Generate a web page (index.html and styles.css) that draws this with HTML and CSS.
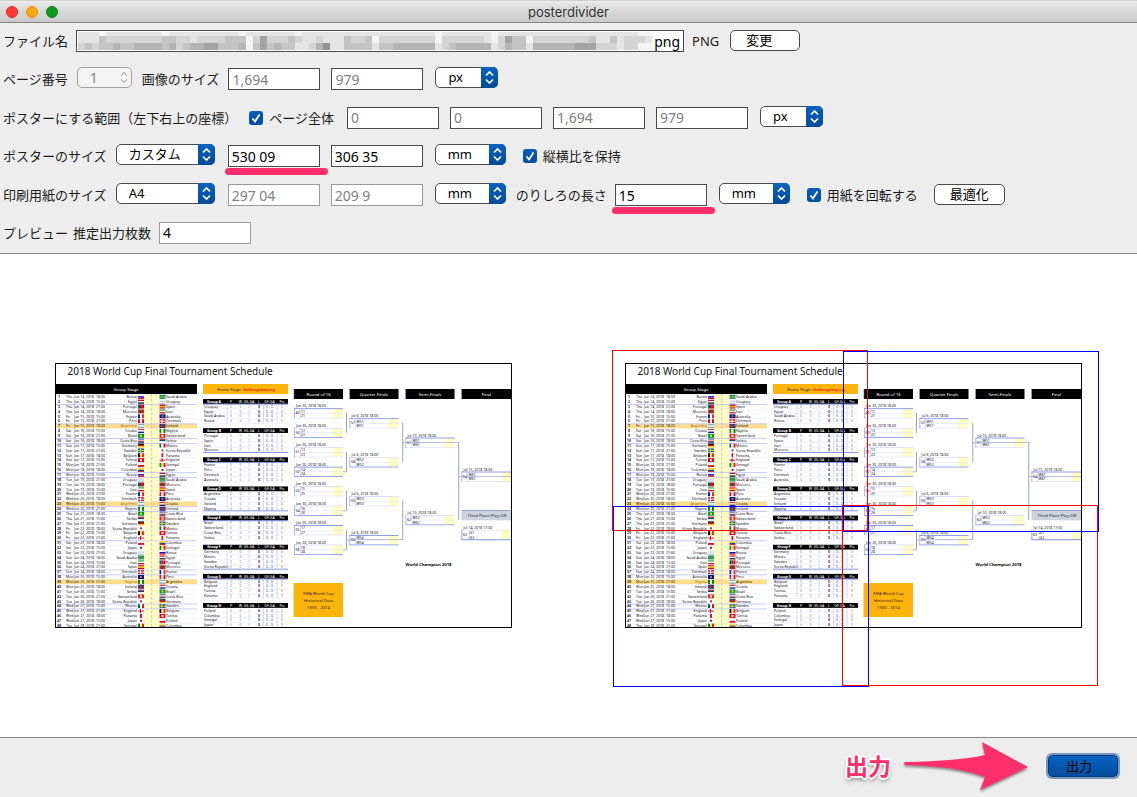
FILE: index.html
```
<!DOCTYPE html>
<html lang="ja">
<head>
    <meta charset="UTF-8">
    <meta name="viewport" content="width=device-width, initial-scale=1.0">
    <title>posterdivider</title>
    <link rel="stylesheet" href="styles.css">
</head>
<body>
    <header class="titlebar">
        <div class="lights">
            <span class="light close"></span>
            <span class="light minimize"></span>
            <span class="light maximize"></span>
        </div>
        <h1>posterdivider</h1>
    </header>

    <form class="settings" id="settings">
        <div class="row">
            <label for="fileName">ファイル名</label>
            <div class="file-field">
                <input type="text" id="fileName" class="field file-name" value="png" readonly>
                <svg id="mosaic" class="mosaic" viewBox="0 0 576 18" preserveAspectRatio="none"></svg>
            </div>
            <span class="text">PNG</span>
            <button type="button" class="btn btn-change">変更</button>
        </div>

        <div class="row">
            <label for="pageNumber">ページ番号</label>
            <div class="spinner">
                <input type="text" id="pageNumber" value="1" disabled>
                <svg class="chevrons" viewBox="0 0 8 14"><path d="M1 5l3-3.5L7 5M1 9l3 3.5L7 9"/></svg>
            </div>
            <label for="imageWidth">画像のサイズ</label>
            <input type="text" id="imageWidth" class="field" value="1,694" disabled>
            <input type="text" class="field" value="979" aria-label="画像の高さ" disabled>
            <div class="select unit-px">
                <select aria-label="単位"><option>px</option></select>
            </div>
        </div>

        <div class="row">
            <span class="text">ポスターにする範囲（左下右上の座標）</span>
            <input type="checkbox" id="wholePage" class="check" checked>
            <label for="wholePage" class="check-label">ページ全体</label>
            <input type="text" class="field" value="0" aria-label="左" disabled>
            <input type="text" class="field" value="0" aria-label="下" disabled>
            <input type="text" class="field" value="1,694" aria-label="右" disabled>
            <input type="text" class="field" value="979" aria-label="上" disabled>
            <div class="select unit-px">
                <select aria-label="単位"><option>px</option></select>
            </div>
        </div>

        <div class="row">
            <label for="posterSize">ポスターのサイズ</label>
            <div class="select size">
                <select id="posterSize"><option>カスタム</option></select>
            </div>
            <div class="marked">
                <input type="text" class="field" value="530 09" aria-label="ポスターの幅">
            </div>
            <input type="text" class="field" value="306 35" aria-label="ポスターの高さ">
            <div class="select unit-mm">
                <select aria-label="単位"><option>mm</option></select>
            </div>
            <input type="checkbox" id="keepRatio" class="check" checked>
            <label for="keepRatio" class="check-label">縦横比を保持</label>
        </div>

        <div class="row">
            <label for="paperSize">印刷用紙のサイズ</label>
            <div class="select size">
                <select id="paperSize"><option>A4</option></select>
            </div>
            <input type="text" class="field muted" value="297 04" aria-label="用紙の幅" disabled>
            <input type="text" class="field muted" value="209 9" aria-label="用紙の高さ" disabled>
            <div class="select unit-mm">
                <select aria-label="単位"><option>mm</option></select>
            </div>
            <label for="margin">のりしろの長さ</label>
            <div class="marked">
                <input type="text" id="margin" class="field" value="15">
            </div>
            <div class="select unit-mm">
                <select aria-label="単位"><option>mm</option></select>
            </div>
            <input type="checkbox" id="rotatePaper" class="check" checked>
            <label for="rotatePaper" class="check-label">用紙を回転する</label>
            <button type="button" class="btn">最適化</button>
        </div>

        <div class="row">
            <span class="text preview-title">プレビュー</span>
            <label for="sheetCount">推定出力枚数</label>
            <input type="text" id="sheetCount" class="field muted" value="4" readonly>
        </div>
    </form>

    <main class="preview">
        <svg id="source" class="poster" width="458" height="337" viewBox="0 -52 1832 1348"></svg>
        <svg id="divided" class="poster" width="487" height="337" viewBox="-52 -52 1948 1348"></svg>
    </main>

    <footer class="actions">
        <span class="callout">出力</span>
        <svg class="arrow" width="126" height="50" viewBox="0 0 126 50">
            <path d="M2 21Q56 20 82 14L79 1L125 26L77 49L82 36Q54 25 2 24Q0 22 2 21Z"/>
        </svg>
        <button type="submit" form="settings" class="output">出力</button>
    </footer>

    <script src="script.js"></script>
</body>
</html>
```
FILE: styles.css
```
* {
    box-sizing: border-box;
}

body {
    margin: 0;
    min-height: 100vh;
    display: flex;
    flex-direction: column;
    background-color: #ededed;
    color: #1c1c1c;
    font-family: "Noto Sans", "Noto Sans CJK JP", sans-serif;
    font-size: 13px;
}

input, select, button {
    font-family: inherit;
}

/* Title bar */
.titlebar {
    display: grid;
    grid-template-columns: 1fr auto 1fr;
    align-items: center;
    height: 23px;
    padding: 1px 6px 0;
    background: linear-gradient(#ededed, #e2e2e2 3px, #cacaca);
    border-top: 1px solid #cfcfcf;
    border-bottom: 1px solid #858585;
}

.titlebar h1 {
    margin: 0;
    font-family: Inter, sans-serif;
    font-size: 13px;
    font-weight: 400;
    line-height: 20px;
    color: #333;
}

.lights {
    display: flex;
    gap: 8px;
}

.light {
    width: 12px;
    height: 12px;
    border-radius: 50%;
}

.close {
    background-color: #ff3b3b;
    border: 1px solid #e0282c;
}

.minimize {
    background-color: #f7a80d;
    border: 1px solid #dd930a;
}

.maximize {
    background-color: #0b9a20;
    border: 1px solid #078018;
}

/* Settings rows */
.settings {
    display: flex;
    flex-direction: column;
    min-height: 230px;
    padding: 0 0 2px 3px;
}

.row {
    flex: 1;
    display: flex;
    align-items: center;
}

label, .text {
    margin-right: 8px;
    line-height: 20px;
    white-space: nowrap;
}

.field {
    width: 92px;
    height: 22px;
    margin-right: 11px;
    padding: 0 3px;
    border: 1px solid #4a4a4a;
    border-radius: 0;
    background-color: #fff;
    color: #000;
    font-size: 14px;
}

.field:disabled {
    color: #808080;
}

.muted {
    border-color: #9a9a9a;
}

.preview-title {
    margin-right: 5px;
}

/* File name with its hidden part */
.file-field {
    position: relative;
    flex: 0 1 608px;
    margin-right: 8px;
}

.file-name {
    display: block;
    width: 100%;
    margin: 0;
    text-align: right;
}

.mosaic {
    position: absolute;
    left: 2px;
    top: 2px;
    width: calc(100% - 32px);
    height: 18px;
}

/* Drop-downs */
.select {
    position: relative;
    height: 21px;
    margin: 0 11px 3px 1px;
}

.select select {
    display: block;
    width: 100%;
    height: 21px;
    padding: 0 20px 0 12px;
    appearance: none;
    border: 1px solid #4a4a4a;
    border-radius: 5px;
    background-color: #fff;
    color: #000;
    font-size: 13px;
    line-height: 19px;
}

.select::after {
    content: "";
    position: absolute;
    top: 0;
    right: 0;
    width: 17px;
    height: 21px;
    border-radius: 0 5px 5px 0;
    background: url("data:image/svg+xml,%3Csvg xmlns='http://www.w3.org/2000/svg' viewBox='0 0 17 21'%3E%3Cpath d='M5 8.5l3.5-3.5L12 8.5M5 12.5l3.5 3.5 3.5-3.5' fill='none' stroke='white' stroke-width='1.6'/%3E%3C/svg%3E"), linear-gradient(#0a62c0, #014a98);
    pointer-events: none;
}

.size {
    width: 99px;
    margin-right: 13px;
}

.unit-px {
    width: 63px;
}

.unit-mm {
    width: 71px;
    margin-right: 10px;
}

.spinner {
    position: relative;
    width: 55px;
    margin: 0 10px 3px 1px;
}

.spinner input {
    display: block;
    width: 100%;
    height: 21px;
    padding: 0 12px;
    border: 1px solid #a0a0a0;
    border-radius: 5px;
    background-color: #f3f3f3;
    color: #808080;
    font-size: 14px;
}

.spinner + label {
    margin-right: 9px;
}

.chevrons {
    position: absolute;
    right: 4px;
    top: 4px;
    width: 8px;
    height: 13px;
    fill: none;
    stroke: #8a8a8a;
}

/* Tick boxes */
.check {
    flex: none;
    appearance: none;
    width: 14px;
    height: 14px;
    margin: 0 6px 0 4px;
    border-radius: 3px;
    background: url("data:image/svg+xml,%3Csvg xmlns='http://www.w3.org/2000/svg' viewBox='0 0 14 14'%3E%3Cpath d='M3.5 7.5l2.5 3L10.5 3.5' fill='none' stroke='white' stroke-width='1.8'/%3E%3C/svg%3E"), linear-gradient(#0a5cb8, #014c9c);
}

.unit-mm + .check {
    margin-left: 7px;
}

.check-label {
    margin-right: 13px;
}

/* Buttons */
.btn {
    height: 21px;
    margin: 0 0 1px 3px;
    padding: 0 15px 1px;
    border: 1px solid #4a4a4a;
    border-radius: 5px;
    background-color: #fff;
    color: #000;
    font-size: 13px;
    line-height: 18px;
}

.btn-change {
    padding-right: 27px;
}

/* Pink underline below a value */
.marked {
    position: relative;
}

.marked::after {
    content: "";
    position: absolute;
    left: -3px;
    top: 23px;
    width: 103px;
    height: 7px;
    border-radius: 4px;
    background-color: #ff2e6c;
}

/* Preview */
.preview {
    flex: 1;
    display: flex;
    justify-content: space-between;
    align-items: flex-start;
    padding: 96px 38px 50px 55px;
    background-color: #fff;
    border-top: 1px solid #858585;
    border-bottom: 1px solid #858585;
}

.poster {
    overflow: visible;
    font-size: 14px;
}

.poster .title {
    font-size: 40px;
}

.poster .head {
    font-size: 17px;
}

.poster .strong {
    font-weight: 700;
}

/* Output bar */
.actions {
    display: flex;
    align-items: center;
    justify-content: flex-end;
    height: 59px;
    padding: 0 19px 3px 0;
}

.callout {
    margin-right: 12px;
    color: #ff2e6c;
    font-size: 23px;
    font-weight: 700;
    line-height: 28px;
    text-shadow: 2px 0 #fff, -2px 0 #fff, 0 2px #fff, 0 -2px #fff, 1px 1px #fff, -1px 1px #fff, 1px -1px #fff, -1px -1px #fff, 0 3px 4px #666;
}

.arrow {
    margin-right: 19px;
    fill: #ff2e6c;
    filter: drop-shadow(0 2px 1px rgba(0, 0, 0, 0.4));
    overflow: visible;
}

.output {
    height: 22px;
    padding: 0 25px 0 17px;
    border: 1px solid #003a7c;
    border-radius: 4px;
    background: linear-gradient(#0863c2, #004c9c);
    box-shadow: 0 0 0 2px #7598bd;
    color: #000;
    font-size: 13px;
    line-height: 20px;
}
```
FILE: script.js
```
const NS = "http://www.w3.org/2000/svg";
const U = 4; // drawing units per pixel

// stripes: "h" rows or "v" columns, then the colours
const flags = {
    "Russia": ["h", "#fff", "#00f", "#d00"],
    "Saudi Arabia": ["h", "#1c8a3c", "#3a9b50", "#1c8a3c"],
    "Egypt": ["h", "#c8102e", "#fff", "#111"],
    "Uruguay": ["h", "#fff", "#9bb8e0", "#fff", "#9bb8e0"],
    "Portugal": ["v", "#063", "#c8102e", "#c8102e"],
    "Spain": ["h", "#c60b1e", "#ffc400", "#c60b1e"],
    "Morocco": ["dot", "#c1272d", "#063"],
    "Iran": ["h", "#239f40", "#fff", "#da0000"],
    "France": ["v", "#00209f", "#fff", "#ef2135"],
    "Australia": ["dot", "#00137f", "#c66"],
    "Peru": ["v", "#c8102e", "#fff", "#c8102e"],
    "Denmark": ["cross", "#c8102e", "#fff"],
    "Argentina": ["h", "#74acdf", "#fff", "#74acdf"],
    "Iceland": ["cross", "#023897", "#d72828"],
    "Croatia": ["h", "#e33", "#fff", "#171796"],
    "Nigeria": ["v", "#080", "#fff", "#080"],
    "Brazil": ["dot", "#009739", "#fedd00"],
    "Switzerland": ["dot", "#d52b1e", "#fff"],
    "Costa Rica": ["h", "#002b7f", "#fff", "#ce1126", "#002b7f"],
    "Serbia": ["h", "#c6363c", "#0c4076", "#fff"],
    "Germany": ["h", "#000", "#d00", "#ffce00"],
    "Mexico": ["v", "#006847", "#fff", "#ce1126"],
    "Sweden": ["cross", "#006aa7", "#fecc00"],
    "Korea Republic": ["dot", "#fff", "#a35"],
    "Belgium": ["v", "#000", "#fae042", "#ed2939"],
    "Panama": ["v", "#fff", "#d21034", "#fff"],
    "Tunisia": ["dot", "#e70013", "#fff"],
    "England": ["cross", "#fff", "#c8102e"],
    "Poland": ["h", "#fff", "#dc143c"],
    "Senegal": ["v", "#00853f", "#fdef42", "#e31b23"],
    "Colombia": ["h", "#fcd116", "#fcd116", "#003893", "#ce1126"],
    "Japan": ["dot", "#fff", "#bc002d"]
};

const groups = [
    ["Uruguay", "Egypt", "Saudi Arabia", "Russia"],
    ["Portugal", "Spain", "Iran", "Morocco"],
    ["France", "Peru", "Denmark", "Australia"],
    ["Argentina", "Croatia", "Iceland", "Nigeria"],
    ["Brazil", "Switzerland", "Costa Rica", "Serbia"],
    ["Germany", "Mexico", "Sweden", "Korea Republic"],
    ["Belgium", "England", "Tunisia", "Panama"],
    ["Poland", "Colombia", "Senegal", "Japan"]
];

const matches = `Russia-Saudi Arabia,Egypt-Uruguay,Portugal-Spain,Morocco-Iran,France-Australia,Peru-Denmark,Argentina-Iceland,Croatia-Nigeria,Brazil-Switzerland,Costa Rica-Serbia,Germany-Mexico,Sweden-Korea Republic,Belgium-Panama,Tunisia-England,Poland-Senegal,Colombia-Japan,Russia-Egypt,Uruguay-Saudi Arabia,Portugal-Morocco,Iran-Spain,France-Peru,Denmark-Australia,Argentina-Croatia,Nigeria-Iceland,Brazil-Costa Rica,Serbia-Switzerland,Germany-Sweden,Korea Republic-Mexico,Belgium-Tunisia,England-Panama,Poland-Colombia,Japan-Senegal,Uruguay-Russia,Saudi Arabia-Egypt,Iran-Portugal,Spain-Morocco,Denmark-France,Australia-Peru,Nigeria-Argentina,Iceland-Croatia,Serbia-Brazil,Switzerland-Costa Rica,Korea Republic-Germany,Mexico-Sweden,England-Belgium,Panama-Tunisia,Japan-Poland,Senegal-Colombia`
    .split(",").map(m => m.split("-"));

const days = ["Thu", "Fri", "Sat", "Sun", "Mon", "Tue", "Wed"];

function add(svg, tag, attrs, text) {
    const el = document.createElementNS(NS, tag);
    for (const key in attrs) el.setAttribute(key, attrs[key]);
    if (text !== undefined) el.textContent = text;
    svg.appendChild(el);
    return el;
}

function rect(svg, x, y, w, h, fill) {
    add(svg, "rect", { x: x * U, y: y * U, width: w * U, height: h * U, fill });
}

function frame(svg, x, y, w, h, stroke) {
    add(svg, "rect", { x: x * U, y: y * U, width: w * U, height: h * U, fill: "none", stroke, "stroke-width": U });
}

function label(svg, x, y, text, cls = "", fill = "#112", anchor = "start") {
    add(svg, "text", { x: x * U, y: y * U, class: cls, fill, "text-anchor": anchor }, text);
}

function drawFlag(svg, x, y, team) {
    const [kind, ...colors] = flags[team];
    const w = 6, h = 4;
    if (kind === "h") {
        colors.forEach((c, i) => rect(svg, x, y + i * h / colors.length, w, h / colors.length, c));
    } else if (kind === "v") {
        colors.forEach((c, i) => rect(svg, x + i * w / colors.length, y, w / colors.length, h, c));
    } else {
        rect(svg, x, y, w, h, colors[0]);
        if (kind === "dot") {
            rect(svg, x + 2, y + 1, 2, 2, colors[1]);
        } else {
            rect(svg, x, y + 1.5, w, 1, colors[1]);
            rect(svg, x + 2, y, 1, h, colors[1]);
        }
    }
}

function drawGroupStage(svg) {
    const top = 31.3, step = 4.867;
    rect(svg, 1, 21, 141, 10, "#000");
    label(svg, 71, 27.8, "Group Stage", "head", "#fff", "middle");
    rect(svg, 89, top, 15, 233.7, "#ffffc0");

    matches.forEach(([home, away], i) => {
        const y = top + i * step;
        const base = y + 3.8;
        const marked = [6, 22, 38].includes(i);
        if (marked) {
            rect(svg, 1, y, 141, step, "#ffe08a");
        }
        const strong = [2, 6, 9, 10, 16, 17, 23, 24, 30, 36, 37, 43, 44].includes(i);
        rect(svg, 1, y, 141, strong ? 0.9 : 0.4, strong ? "#c3c6fb" : "#e3e4fa");
        const date = 14 + Math.floor(i / 3.3);
        label(svg, 4, base, i + 1, "strong", "#223", "middle");
        label(svg, 11, base, days[Math.floor(i / 3.3) % 7]);
        label(svg, 19, base, "Jun " + date + ", 2018");
        label(svg, 41, base, ["18:00", "15:00", "21:00"][i % 3]);
        label(svg, 82, base, home, "", marked ? "#a76a1c" : "#112", "end");
        drawFlag(svg, 83, y + 0.6, home);
        drawFlag(svg, 104.5, y + 0.6, away);
        label(svg, 111, base, away);
    });
    add(svg, "line", { x1: 96.7 * U, x2: 96.7 * U, y1: top * U, y2: 264 * U, stroke: "#b4b6e0", "stroke-width": 3, "stroke-dasharray": "12 6" });
}

function drawTables(svg) {
    rect(svg, 148, 21, 85, 10, "#fdb40d");
    label(svg, 162, 27.6, "Home Page:", "head", "#321");
    label(svg, 188, 27.6, "thebluegalaxy.org", "strong", "#e20");

    groups.forEach((teams, g) => {
        const y = 36 + g * 29.15;
        rect(svg, 148, y, 85, 4.8, "#000");
        label(svg, 159, y + 3.7, "Group " + "ABCDEFGH"[g], "strong", "#fff", "middle");
        const cols = [[176, "P", "#987"], [185.5, "W", "#887"], [194, "GS-GA", "#9bd"], [204, "L", "#314"], [214.5, "GF-GA", "#358"], [227, "Pts", "#b73"]];
        cols.forEach(([x, name]) => label(svg, x, y + 3.7, name, "", "#fff", "middle"));
        teams.forEach((team, i) => {
            const base = y + 8.7 + i * 4.867;
            label(svg, 149, base, team);
            cols.forEach(([x, name, color]) => {
                label(svg, x, base, name === "GF-GA" ? "0 - 0" : "0", name === "L" ? "strong" : "", color, "middle");
            });
            rect(svg, 148, base + 0.9, 85, 0.4, "#dcdefa");
        });
        rect(svg, 148, y + (g % 2 ? 24 : 4.8), 85, 0.8, "#7181ee");
        [171.7, 208, 221.7].forEach(x => rect(svg, x, y + 4.8, 0.7, 19.4, "#c3c6f5"));
    });
}

function drawRound(svg, x, w, title, tops, firstNo, when, teams) {
    rect(svg, x, 26, w, 10, "#000");
    rect(svg, x - 0.5, 26, 0.7, 10, "#8da0d8");
    label(svg, x + w / 2, 32.7, title, "head", "#fff", "middle");
    tops.forEach((y, i) => {
        const edge = i % 3 === 0 ? "#7585ee" : "#d8daf8";
        rect(svg, x + w - 10, y + 0.4, 10, 9.5, "#ffffc2");
        rect(svg, x, y, w, 0.8, edge);
        rect(svg, x, y + 9.4, w, 0.8, i % 2 ? "#8592f0" : "#e1e3fa");
        rect(svg, x, y + 4.8, w, 0.4, "#d0d3f5");
        rect(svg, x, y, 0.7, 10, "#8f9bec");
        rect(svg, x + 6, y, 0.6, 10, "#b6bdf2");
        label(svg, x + 3.4, y + 6, firstNo + i, "", "#112", "middle");
        label(svg, x + 7, y + 4.2, teams[0] + (i + 1));
        label(svg, x + 7, y + 8.7, teams[1] + (i + 1));
        label(svg, x + 2, y - 1, when);
    });
}

function bracket(svg, x, y1, y2, left, right) {
    const color = "#8c9db5";
    rect(svg, x, y1, 0.9, y2 - y1, color);
    if (left) rect(svg, x - 3, y2, 3.9, 0.7, color);
    if (right) rect(svg, x, (y1 + y2) / 2, 3, 0.7, color);
}

function drawKnockout(svg) {
    const tops = (start, step, n) => Array.from({ length: n }, (_, i) => start + i * step);
    drawRound(svg, 239, 49, "Round of 16", tops(45.3, 19.47, 8), 49, "Jun 30, 2018   18:00", ["1", "2"]);
    drawRound(svg, 294.5, 49, "Quarter Finals", tops(55.3, 38.93, 4), 57, "Jul 6, 2018   18:00", ["W5", "W5"]);
    drawRound(svg, 350.5, 49, "Semi-Finals", [74.6, 152], 61, "Jul 10, 2018   18:00", ["W5", "W6"]);
    drawRound(svg, 406.5, 50, "Final", [108.6], 64, "Jul 15, 2018   18:00", ["W6", "W6"]);

    [50, 89, 128, 167].forEach((y, i) => bracket(svg, 291, y, y + 19.5, i > 0, i === 3));
    bracket(svg, 347.3, 60, 99, false, true);
    bracket(svg, 347.3, 137.6, 176.3, true, false);
    bracket(svg, 403.3, 79, 157, false, false);
    rect(svg, 350.5, 79, 53, 0.7, "#a3add0");
    rect(svg, 403.3, 113.3, 53, 0.7, "#a3add0");
    rect(svg, 294.5, 176.3, 53, 0.7, "#a3add0");

    rect(svg, 406.5, 147.3, 50, 10, "#cdd2dc");
    rect(svg, 406.5, 147, 50, 0.8, "#8293c4");
    label(svg, 432, 154.2, "Third Place Play-Off", "head", "#223", "middle");
    rect(svg, 446.5, 167, 10, 9.5, "#ffffc2");
    rect(svg, 406.5, 167, 50, 0.5, "#d8daf8");
    rect(svg, 406.5, 167, 0.8, 10, "#7585ee");
    rect(svg, 406.5, 176.3, 50, 0.9, "#7585ee");
    label(svg, 410, 173, "63", "", "#112", "middle");
    label(svg, 413.5, 171.2, "L61");
    label(svg, 413.5, 175.7, "L62");
    label(svg, 408.5, 166, "Jul 14, 2018   17:00");

    label(svg, 373.5, 202.5, "World Champion 2018", "head strong", "#000", "middle");

    rect(svg, 238.5, 220, 49.5, 34, "#fdb40d");
    label(svg, 263.5, 232, "FIFA World Cup", "head", "#321", "middle");
    label(svg, 263.5, 239, "Historical Data", "head", "#321", "middle");
    label(svg, 263.5, 246, "1930 - 2014", "head", "#321", "middle");
}

function drawPoster(svg) {
    label(svg, 12.5, 11.8, "2018 World Cup Final Tournament Schedule", "title", "#111");
    drawGroupStage(svg);
    drawTables(svg);
    drawKnockout(svg);
    frame(svg, 0.5, 0.5, 456, 264, "#000");
}

function drawMosaic(svg) {
    const rows = [
        "eeefeeeeeeeefeeeeeeeeeefeeeeeeefeeeeeeeeeeeeeeeeeeefeeeeeeefeeeeeeeeeeeeeeeeeeeeff",
        "eeecddddddddccddeddddcccfdadddcdeedeeecddcfddddddddfddddddefdaccfddddddddceecedddeef",
        "dcdccbccbbbbcbdcbbaacccbfcacbcceedb9eecccceccbbbbbbedcbbbbbedbccebbbbbbaaadddeddff"
    ];
    const tops = [0, 4, 11];
    const heights = [4, 7, 7];
    rows.forEach((row, r) => {
        [...row].slice(0, 82).forEach((c, i) => {
            add(svg, "rect", { x: i * 7, y: tops[r], width: 7.2, height: heights[r], fill: "#" + (c === "f" ? "f4f4f4" : c + "4" + c + "4" + c + "4") });
        });
    });
}

drawMosaic(document.getElementById("mosaic"));

drawPoster(document.getElementById("source"));

// Four overlapping sheets on top of the poster
const divided = document.getElementById("divided");
drawPoster(divided);
frame(divided, -12.5, -12.5, 255, 180, "#f00");
frame(divided, 218.5, -11.5, 255, 180, "#00f");
frame(divided, -11.5, 143.5, 255, 180, "#00f");
frame(divided, 217.5, 142.5, 255, 180, "#f00");
```
